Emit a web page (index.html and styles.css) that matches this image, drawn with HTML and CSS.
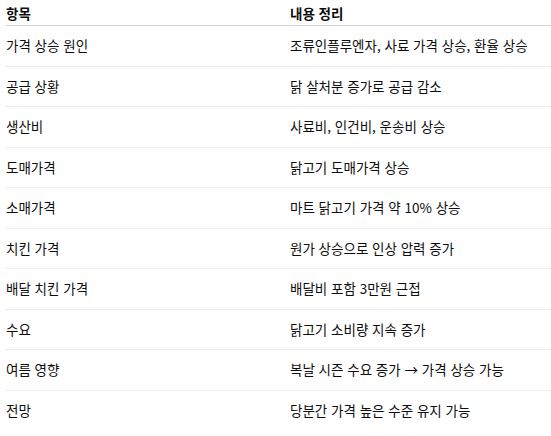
FILE: index.html
```html
<!DOCTYPE html>
<html lang="ko">
<head>
<meta charset="utf-8">
<link rel="stylesheet" href="styles.css">
</head>
<body>
<table class="summary">
  <thead>
    <tr><th class="col-item">항목</th><th>내용 정리</th></tr>
  </thead>
  <tbody>
    <tr><td>가격 상승 원인</td><td>조류인플루엔자, 사료 가격 상승, 환율 상승</td></tr>
    <tr><td>공급 상황</td><td>닭 살처분 증가로 공급 감소</td></tr>
    <tr><td>생산비</td><td>사료비, 인건비, 운송비 상승</td></tr>
    <tr><td>도매가격</td><td>닭고기 도매가격 상승</td></tr>
    <tr><td>소매가격</td><td>마트 닭고기 가격 약 10% 상승</td></tr>
    <tr><td>치킨 가격</td><td>원가 상승으로 인상 압력 증가</td></tr>
    <tr><td>배달 치킨 가격</td><td>배달비 포함 3만원 근접</td></tr>
    <tr><td>수요</td><td>닭고기 소비량 지속 증가</td></tr>
    <tr><td>여름 영향</td><td>복날 시즌 수요 증가 → 가격 상승 가능</td></tr>
    <tr><td>전망</td><td>당분간 가격 높은 수준 유지 가능</td></tr>
  </tbody>
</table>
</body>
</html>
```
FILE: styles.css
```css
html, body {
  margin: 0;
  padding: 0;
  background: #ffffff;
}
body {
  font-family: "Noto Sans CJK KR", "Noto Sans", sans-serif;
  font-size: 13.5px;
  color: #0d0d0d;
}
.summary {
  margin-left: 6px;
  width: 545px;
  border-collapse: collapse;
  table-layout: fixed;
}
.summary .col-item {
  width: 284px;
}
.summary th {
  text-align: left;
  font-weight: 700;
  padding: 3px 0 2px 0;
  line-height: 20px;
  border-bottom: 1px solid #d4d4d4;
}
.summary td {
  padding: 10px 0;
  line-height: 19.5px;
  border-bottom: 1px solid #ececec;
}
.summary tbody tr:last-child td {
  border-bottom: none;
}
```
